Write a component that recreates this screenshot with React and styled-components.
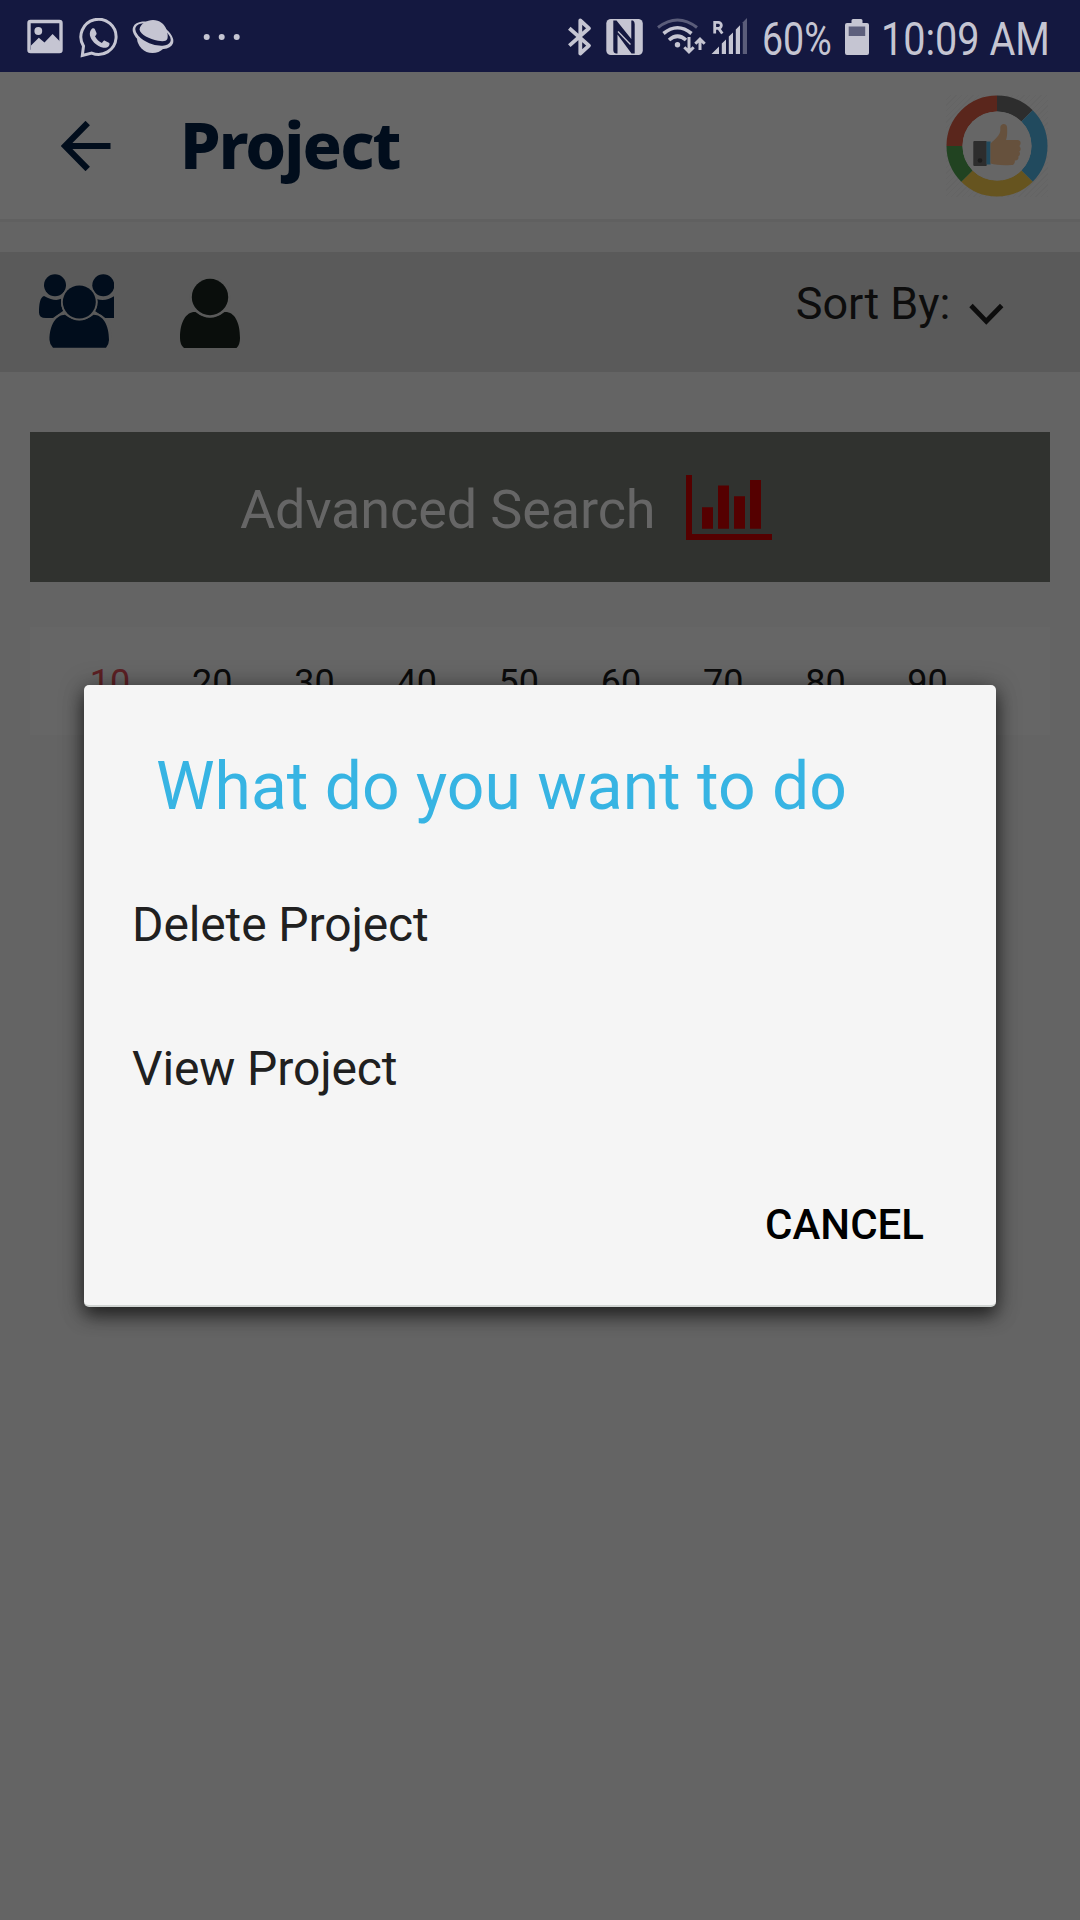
import React from "react";
import styled, { createGlobalStyle } from "styled-components";

const GlobalStyle = createGlobalStyle`
  * { box-sizing: border-box; }
  html, body { margin: 0; padding: 0; background: #646464; }
  body { font-family: Roboto, "Liberation Sans", sans-serif; }
`;

const Screen = styled.div`
  position: relative;
  width: 1080px;
  height: 1920px;
  overflow: hidden;
  background: #646464;
  display: flex;
  flex-direction: column;
`;

const StatusBar = styled.div`
  height: 72px;
  flex: none;
  background: #141840;
  color: #c5c5d2;
  display: flex;
  justify-content: space-between;
  padding: 0 32px 0 26px;
`;

const StatusGroup = styled.div`
  display: flex;
  align-items: flex-start;
  height: 72px;
`;

const Glyph = styled.svg`
  display: block;
  flex: none;
  width: ${(p) => p.$w}px;
  height: ${(p) => p.$h}px;
  margin-left: ${(p) => p.$ml || 0}px;
  margin-top: ${(p) => p.$mt || 0}px;
`;

const StatusText = styled.div`
  width: ${(p) => p.$w}px;
  margin-left: ${(p) => p.$ml}px;
  font-size: 45.5px;
  line-height: 79px;
  white-space: nowrap;

  span {
    display: inline-block;
    transform: scaleX(${(p) => p.$scale});
    transform-origin: 0 0;
  }
`;

const Header = styled.header`
  height: 150px;
  flex: none;
  background: #676767;
  border-bottom: 3px solid #606060;
  display: flex;
  align-items: flex-start;
`;

const Title = styled.h1`
  margin: 28px 0 0 69px;
  flex: 1;
  font-family: "Noto Sans", "Open Sans", sans-serif;
  font-weight: 800;
  font-size: 65px;
  line-height: 88px;
  letter-spacing: -1.9px;
  color: #010d1c;
`;

const Avatar = styled.div`
  width: 102px;
  height: 102px;
  margin: 23px 32px 0 0;
  background: repeating-linear-gradient(135deg, #676767 0 3px, #646464 3px 4px);
`;

const Filters = styled.div`
  height: 120px;
  flex: none;
  margin-top: 30px;
  background: #5a5a5a;
  display: flex;
  align-items: flex-start;
`;

const SortBy = styled.div`
  display: flex;
  margin: 26px 76.5px 0 auto;
  font-size: 45px;
  line-height: 52px;
  color: #0d0d0d;
`;

const SearchButton = styled.div`
  height: 150px;
  flex: none;
  margin: 60px 30px 0;
  padding-left: 210px;
  background: #30322f;
  color: #666666;
  display: flex;
  align-items: flex-start;
  font-size: 54px;
  line-height: 155px;
  letter-spacing: -0.12px;
`;

const Pager = styled.div`
  height: 108px;
  flex: none;
  margin: 45px 30px 0;
  padding: 29px 0 0 29px;
  background: #666666;
  display: flex;
`;

const PageNumber = styled.div`
  width: 102.2px;
  text-align: center;
  font-size: 36px;
  line-height: 54px;
  color: ${(p) => (p.$active ? "#5c2024" : "#0c0c0c")};
`;

const Overlay = styled.div`
  position: absolute;
  inset: 0;
  padding: 685px 84px 0;
`;

const Dialog = styled.div`
  height: 622px;
  border-radius: 5px;
  background: #f5f5f5;
  border-bottom: 2px solid #d0d4d2;
  box-shadow: 0 9px 18px rgba(0, 0, 0, 0.55), 0 2px 24px rgba(0, 0, 0, 0.35);
  display: flex;
  flex-direction: column;
  padding-top: 63px;
`;

const DialogTitle = styled.h2`
  margin: 0 0 27px 72px;
  font-weight: 400;
  font-size: 66px;
  line-height: 78px;
  color: #37b4e3;
`;

const Option = styled.div`
  height: 144px;
  line-height: 144px;
  padding-left: 48px;
  font-size: 48px;
  letter-spacing: -0.12px;
  color: #202020;
`;

const Cancel = styled.div`
  align-self: flex-end;
  margin: 12px 72px 0 0;
  line-height: 144px;
  font-size: 42px;
  font-weight: 500;
  color: #000;
`;

const GalleryIcon = () => (
  <Glyph $w={38} $h={36} $mt={19} viewBox="26 19 38 36">
    <rect x="29" y="21.5" width="32" height="30" rx="1.5" fill="none" stroke="currentColor" strokeWidth="3.4" />
    <circle cx="38.3" cy="31" r="3.9" fill="currentColor" />
    <path d="M31 45.5 38.8 37.8 44.5 42.6 52.6 34 60 41.5V51H31Z" fill="currentColor" />
  </Glyph>
);

const WhatsappIcon = () => (
  <Glyph $w={40} $h={40} $mt={17.5} $ml={15} viewBox="78.3 17.5 40 40">
    <path
      d="M82.8 45.6A17.6 17.6 0 1 1 91 52.6L81.6 55Z"
      fill="none"
      stroke="currentColor"
      strokeWidth="3"
    />
    <path
      d="M91.2 28.2c1.2-.8 2.6-.5 3.1.7l1.5 3.5c.3.8.1 1.5-1.5 3.4 1.4 2.9 3.9 5.3 6.9 6.6 1.7-2 2.2-2.5 3-2.2l4 2c1 .5.7 2.4-.2 3.5-1.3 1.5-3.5 1.9-5.4 1.5-7.4-1.7-12.500-7.700-13.400-12.500-.4-2.600.5-5.300 2-6.500Z"
      fill="currentColor"
    />
  </Glyph>
);

const PlanetIcon = () => (
  <Glyph $w={44} $h={36} $mt={19} $ml={12} viewBox="131 19 44 36">
    <circle cx="152.500" cy="37.500" r="15.500" fill="currentColor" />
    <ellipse cx="153" cy="35.300" rx="21.500" ry="12" transform="rotate(23 153 35.300)" fill="currentColor" />
    <ellipse cx="153" cy="34.500" rx="18.800" ry="9.400" transform="rotate(23 153 34.500)" fill="#141840" />
    <path d="M139.500 29.500C140.500 23.500 147 20 153 20c6.500 0 11.500 4 13.500 9.500 1.300 4 1.600 7.500.8 9.500-1 2.500-5 2.500-9.300 1.700C149.500 39 140.500 35 139.500 29.500Z" fill="currentColor" />
  </Glyph>
);

const DotsIcon = () => (
  <Glyph $w={40} $h={10} $mt={32} $ml={27} viewBox="202 32 40 10" fill="currentColor">
    <circle cx="206.700" cy="37" r="3" />
    <circle cx="221.700" cy="37" r="3" />
    <circle cx="236.700" cy="37" r="3" />
  </Glyph>
);

const BluetoothIcon = () => (
  <Glyph $w={26} $h={40} $mt={17} viewBox="567 17 26 40">
    <path d="M569.300 28.300 589 45.600 580.300 53.500V20.500L589 28.300 569.300 45.600" fill="none" stroke="currentColor" strokeWidth="3.800" strokeLinejoin="round" />
  </Glyph>
);

const NfcIcon = () => (
  <Glyph $w={38} $h={38} $mt={18} $ml={13} viewBox="606 18 38 38">
    <rect x="606.300" y="19" width="36.500" height="36" rx="4.500" fill="currentColor" />
    <path d="M613.300 20.500h3.200L631.300 39V20.500h1.700q1.700 1 1.700 3.500V53.500h-3.200L617.500 34.500V53.500h-1.500q-2.700-.5-2.700-3.500Z" fill="#141840" />
    <path d="M618 31.500 630.500 44.500" fill="none" stroke="currentColor" strokeWidth="1.300" />
  </Glyph>
);

const WifiIcon = () => (
  <Glyph $w={50} $h={38} $mt={17} $ml={12} viewBox="656 17 50 38" fill="none" stroke="currentColor">
    <path d="M658 27.500Q677.500 12.500 697 27.500" strokeWidth="3" opacity=".4" />
    <path d="M663.500 33.500Q677.500 22 691.500 33.500" strokeWidth="3.600" />
    <path d="M669 40Q677.500 32.500 686 40" strokeWidth="3.600" />
    <circle cx="677.500" cy="44.800" r="2.700" fill="currentColor" stroke="none" />
    <path d="M689 37v14M684.300 47.200l4.700 4.700 4.700-4.700M700 50V39.500M695.300 43.800l4.700-4.700 4.700 4.700" strokeWidth="3" />
  </Glyph>
);

const SignalIcon = () => (
  <Glyph $w={38} $h={38} $mt={17} $ml={5} viewBox="711 17 38 38" fill="currentColor">
    <path d="M714.700 33.500V22.300h3.600a2.800 2.800 0 0 1 0 6.100h-3.600m4 0 3.600 5.100" fill="none" stroke="currentColor" strokeWidth="2.800" />
    <path d="M711.500 54 719 46.500V54ZM721.800 43.600l4.200-4.200V54h-4.200ZM728.800 36.600 733 32.400V54h-4.200ZM735.800 29.400 740 25.200V54h-4.200Z" />
    <path d="M742.800 22.300 747 18V54h-4.200Z" opacity=".4" />
  </Glyph>
);

const BatteryIcon = () => (
  <Glyph $w={24} $h={36} $mt={19} $ml={11} viewBox="845 19 24 36">
    <path d="M847 23h4.500v-2.500q0-1.500 1.500-1.500h8q1.500 0 1.500 1.500V23H867q2 0 2 2V53q0 2-2 2H847q-2 0-2-2V25q0-2 2-2Z" fill="currentColor" />
    <rect x="848.700" y="26.500" width="16.500" height="9.500" fill="#5d5f7c" />
  </Glyph>
);

const BackIcon = () => (
  <Glyph $w={50} $h={50} $mt={49} $ml={61} viewBox="61 121.500 50 50">
    <path d="M110.500 146.500H66M87.700 123.500 65 146.500 87.700 169.500" fill="none" stroke="#010d1c" strokeWidth="6.200" />
  </Glyph>
);

const RING = [
  ["#2d2d2d", 0, 45],
  ["#214a5e", 45, 135],
  ["#66541f", 135, 225],
  ["#214321", 225, 270],
  ["#5a261c", 270, 360],
];

const arc = (from, to, r) => {
  const at = (deg) => {
    const a = ((deg - 90) * Math.PI) / 180;
    return `${51 + r * Math.cos(a)} ${51 + r * Math.sin(a)}`;
  };
  return `M${at(from)}A${r} ${r} 0 0 1 ${at(to)}`;
};

const LogoIcon = () => (
  <Glyph $w={102} $h={102} viewBox="0 0 102 102">
    {RING.map(([color, from, to]) => (
      <path key={from} d={arc(from, to, 42.500)} fill="none" stroke={color} strokeWidth="16" />
    ))}
    <circle cx="51" cy="51" r="34.500" fill="#666" />
    <rect x="27.300" y="46" width="13.500" height="25" rx="1" fill="#2d2d2d" />
    <circle cx="34" cy="65.500" r="2.300" fill="#1c1c1c" />
    <path d="M40.500 46.500h4V69.500h-4Z" fill="#214a5e" />
    <path
      d="M44.500 48.500c5-4.500 9-8 9.800-12.500v-3.500c0-4.500 6.600-5 6.800 0 .2 4.500.2 8.500-1.100 12.500h11.500c4 0 3.500 4.500 1.800 6 2 2 1.500 4.500 0 5.500 1.200 2 .7 4-1 5 .8 3-1.500 4-3.500 4 .5 3-1.500 4.500-3.500 4.500-8 .5-15 .2-20.800-1.500Z"
      fill="#66513d"
    />
  </Glyph>
);

const GroupIcon = () => (
  <Glyph $w={75} $h={74} $mt={22} $ml={39} viewBox="39 274 75 74" fill="#010d1c">
    <circle cx="55" cy="285.300" r="11" />
    <circle cx="103.300" cy="285.300" r="11" />
    <path d="M44 296q11 6 17 2.800l2 12.200-10 7H46q-7 0-7-5.500c0-8 1-15.500 5-16.500ZM114 296.200q-8 5.500-17.500 2.800L95 311l10 7h9Z" />
    <circle cx="79.300" cy="302" r="18.200" fill="#5a5a5a" />
    <path d="M64.500 313c-9 0-17 10-17 25V348h64V338c0-15-8-25-17-25Z" fill="#5a5a5a" />
    <path d="M65 314.800q14.300 11.500 28.600 0C103 315 109 325 109 340q0 4-3 7.800H53q-3.500-3.800-3.500-7.800c0-15 6.500-25 15.500-25.200Z" />
    <circle cx="79.300" cy="302" r="18.300" fill="#5a5a5a" />
    <circle cx="79.300" cy="302" r="16.500" />
  </Glyph>
);

const PersonIcon = () => (
  <Glyph $w={60} $h={70} $mt={26} $ml={66} viewBox="180 278 60 70" fill="#0a0e0c">
    <path d="M195.500 312q14.500 11.500 29 0C234.500 311.500 240 322 240 338q0 7-3.500 10H184q-4-3-4-10c0-16 6-26.500 15.500-26Z" />
    <circle cx="210" cy="297" r="20.300" fill="#5a5a5a" />
    <circle cx="210" cy="297" r="18.200" />
  </Glyph>
);

const ChevronIcon = () => (
  <Glyph $w={36} $h={24} $mt={25} $ml={17} viewBox="967 303 36 24">
    <path d="M970 305.500 985.300 321.300 1000.700 305.500" fill="none" stroke="#0d0d0d" strokeWidth="4.800" />
  </Glyph>
);

const ChartIcon = () => (
  <Glyph $w={86} $h={65} $mt={43} $ml={30.500} viewBox="686 475 86 65" fill="#550000">
    <path d="M686 475h6v59h80v6H686ZM702 507.300h11v21.500h-11ZM718 485.500h11v43.300h-11ZM734 496.200h11v32.600h-11ZM750 480h11v48.800h-11Z" />
  </Glyph>
);

export default function App() {
  return (
    <Screen>
      <GlobalStyle />
      <StatusBar>
        <StatusGroup>
          <GalleryIcon />
          <WhatsappIcon />
          <PlanetIcon />
          <DotsIcon />
        </StatusGroup>
        <StatusGroup>
          <BluetoothIcon />
          <NfcIcon />
          <WifiIcon />
          <SignalIcon />
          <StatusText $w={72} $ml={13} $scale={0.825}>
            <span>60%</span>
          </StatusText>
          <BatteryIcon />
          <StatusText $w={167} $ml={12} $scale={0.87}>
            <span>10:09 AM</span>
          </StatusText>
        </StatusGroup>
      </StatusBar>
      <Header>
        <BackIcon />
        <Title>Project</Title>
        <Avatar>
          <LogoIcon />
        </Avatar>
      </Header>
      <Filters>
        <GroupIcon />
        <PersonIcon />
        <SortBy>
          Sort By:
          <ChevronIcon />
        </SortBy>
      </Filters>
      <SearchButton>
        Advanced Search
        <ChartIcon />
      </SearchButton>
      <Pager>
        {[10, 20, 30, 40, 50, 60, 70, 80, 90].map((n) => (
          <PageNumber key={n} $active={n === 10}>
            {n}
          </PageNumber>
        ))}
      </Pager>
      <Overlay>
        <Dialog>
          <DialogTitle>What do you want to do</DialogTitle>
          <Option>Delete Project</Option>
          <Option>View Project</Option>
          <Cancel>CANCEL</Cancel>
        </Dialog>
      </Overlay>
    </Screen>
  );
}
